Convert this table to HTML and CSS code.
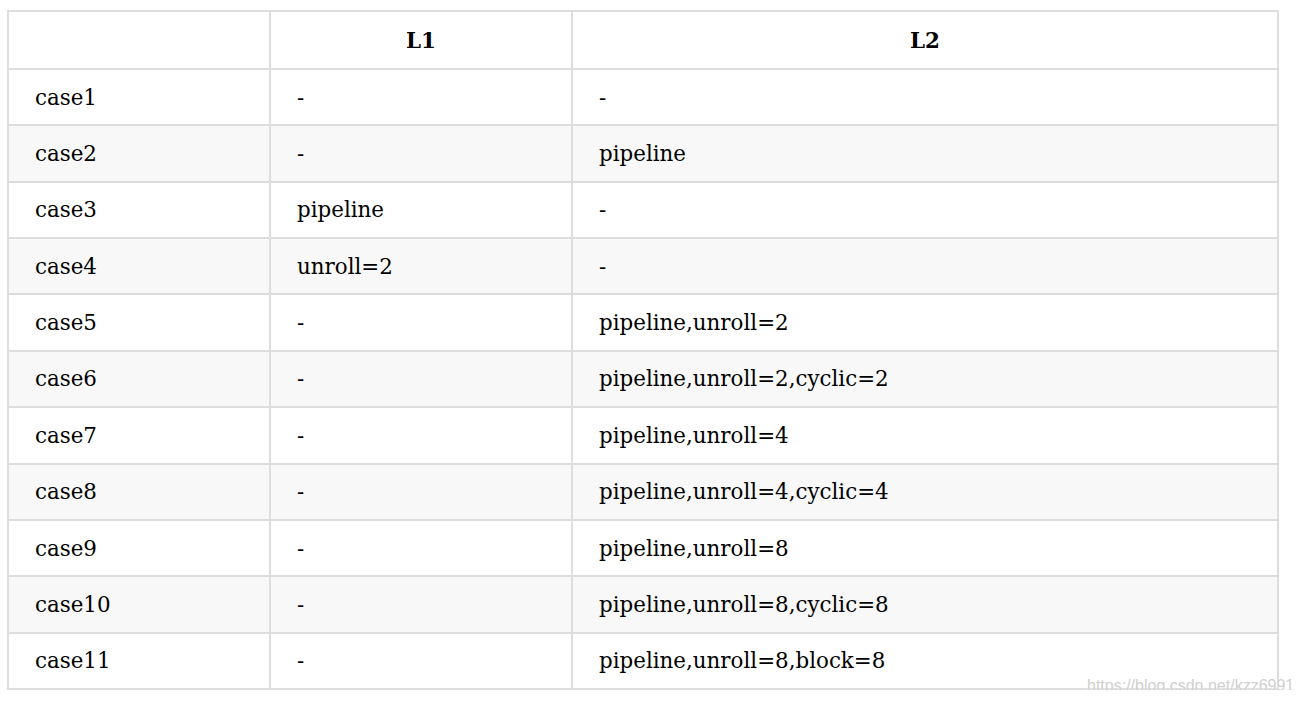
FILE: index.html
```html
<!DOCTYPE html>
<html lang="en">
<head>
<meta charset="utf-8">
<title>Table</title>
<link rel="stylesheet" href="styles.css">
</head>
<body>
<div class="page">
  <table class="grid">
    <colgroup>
      <col class="c1">
      <col class="c2">
      <col class="c3">
    </colgroup>
    <thead>
      <tr><th></th><th>L1</th><th>L2</th></tr>
    </thead>
    <tbody>
      <tr><td>case1</td><td>-</td><td>-</td></tr>
      <tr><td>case2</td><td>-</td><td>pipeline</td></tr>
      <tr><td>case3</td><td>pipeline</td><td>-</td></tr>
      <tr><td>case4</td><td>unroll=2</td><td>-</td></tr>
      <tr><td>case5</td><td>-</td><td>pipeline,unroll=2</td></tr>
      <tr><td>case6</td><td>-</td><td>pipeline,unroll=2,cyclic=2</td></tr>
      <tr><td>case7</td><td>-</td><td>pipeline,unroll=4</td></tr>
      <tr><td>case8</td><td>-</td><td>pipeline,unroll=4,cyclic=4</td></tr>
      <tr><td>case9</td><td>-</td><td>pipeline,unroll=8</td></tr>
      <tr><td>case10</td><td>-</td><td>pipeline,unroll=8,cyclic=8</td></tr>
      <tr><td>case11</td><td>-</td><td>pipeline,unroll=8,block=8</td></tr>
    </tbody>
  </table>
  <div class="watermark">https://blog.csdn.net/kzz6991</div>
</div>
</body>
</html>
```

FILE: styles.css
```css
html, body {
  margin: 0;
  padding: 0;
  background: #ffffff;
}

.page {
  position: relative;
  padding: 10px 0 0 7px;
  width: 1270px;
}

.grid {
  border-collapse: collapse;
  width: 1270px;
  table-layout: fixed;
  font-family: "DejaVu Serif", "Liberation Serif", serif;
  font-size: 21.4px;
  color: #000000;
}

.c1 { width: 262px; }
.c2 { width: 302px; }
.c3 { width: 706px; }

.grid th,
.grid td {
  border: 2px solid #dddddd;
  padding: 0 26px;
  vertical-align: middle;
  text-align: left;
}

.grid th {
  height: 56px;
  font-weight: bold;
  text-align: center;
}

.grid td {
  height: 54.36px;
}

.grid tbody tr:nth-child(even) td {
  background: #f8f8f8;
}

.watermark {
  position: absolute;
  left: 1087px;
  top: 677px;
  font-family: "Liberation Sans", Arial, sans-serif;
  font-size: 16px;
  color: #cfcfcf;
  white-space: nowrap;
  text-shadow: 0 0 2px #ffffff;
}
```
